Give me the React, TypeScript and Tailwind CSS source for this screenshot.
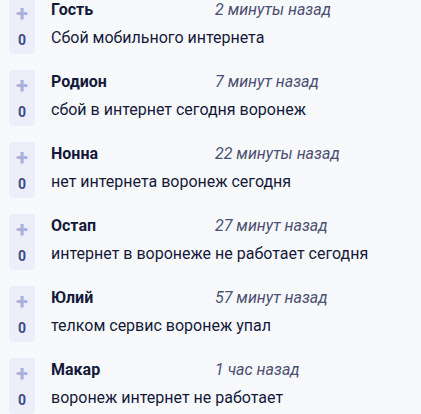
const comments = [
  { name: "Гость", time: "2 минуты назад", text: "Сбой мобильного интернета" },
  { name: "Родион", time: "7 минут назад", text: "сбой в интернет сегодня воронеж" },
  { name: "Нонна", time: "22 минуты назад", text: "нет интернета воронеж сегодня" },
  { name: "Остап", time: "27 минут назад", text: "интернет в воронеже не работает сегодня" },
  { name: "Юлий", time: "57 минут назад", text: "телком сервис воронеж упал" },
  { name: "Макар", time: "1 час назад", text: "воронеж интернет не работает" },
];

const Comment = ({ name, time, text }: { name: string; time: string; text: string }) => {
  return (
    <div className="flex gap-4 pl-[9px]">
      {/* vote box */}
      <div className="flex flex-col items-center w-[26px] h-[56px] rounded bg-[#eceff9] pt-[5px]">
        <span className="text-[22px] leading-[22px] font-bold text-[#a9afd9]">+</span>
        <span className="mt-[7px] text-[14px] leading-[16px] font-bold text-[#3c4a8c]">0</span>
      </div>
      <div className="flex flex-col pt-[2px]">
        <div className="flex items-center h-[20px]">
          <span className="w-[164px] text-[16px] font-bold text-[#14193a]">{name}</span>
          <span className="text-[16px] italic text-[#4b5072]">{time}</span>
        </div>
        <div className="mt-[8px] text-[16px] leading-[20px] text-[#14193a]">{text}</div>
      </div>
    </div>
  );
};

export default function App() {
  return (
    <div
      className="w-[421px] h-[414px] overflow-hidden bg-[#f8f9fc]"
      style={{ fontFamily: "Roboto, 'Liberation Sans', sans-serif" }}
    >
      <div className="flex flex-col gap-[16px] -mt-[2px]">
        {comments.map((c) => (
          <Comment key={c.name} {...c} />
        ))}
      </div>
    </div>
  );
}
